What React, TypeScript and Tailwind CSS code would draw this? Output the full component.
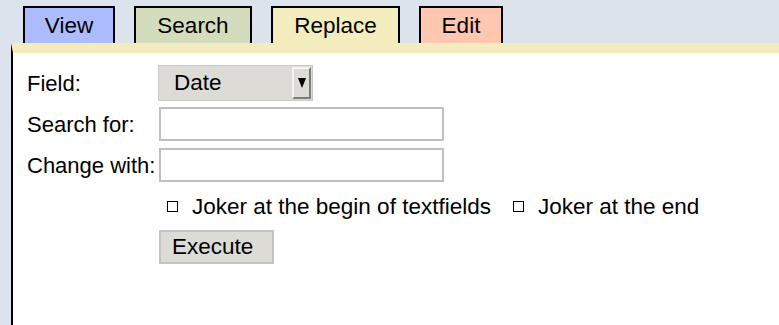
const tabs = [
  { label: "View", width: "w-[92px]", bg: "bg-[#adbcff]" },
  { label: "Search", width: "w-[118px]", bg: "bg-[#d3ddbd]" },
  { label: "Replace", width: "w-[129px]", bg: "bg-[#f3ecbd]" },
  { label: "Edit", width: "w-[84px]", bg: "bg-[#ffc6b0]" },
];

const Check = ({ label }: { label: string }) => (
  <label className="flex items-center">
    <span className="w-[11px] h-[11px] border border-black bg-white mr-[14px] -mt-[2px]" />
    <span>{label}</span>
  </label>
);

export default function App() {
  return (
    <div className="w-[779px] h-[325px] bg-[#dde3ec] font-['Liberation_Sans',Arial,sans-serif] text-[22.5px] text-black overflow-hidden">
      <div className="flex gap-[19px] pl-[23px] pt-[6px]">
        {tabs.map((t) => (
          <div
            key={t.label}
            className={`${t.width} ${t.bg} h-[37px] border-2 border-b-0 border-black flex items-center justify-center leading-none pt-[2px]`}
          >
            {t.label}
          </div>
        ))}
      </div>
      <div className="ml-[11px] h-[282px] bg-white border-l-2 border-black border-t-[10px] border-t-[#f3ecbd] pl-[14px] pt-[12px]">
        <div className="flex items-center h-[36px]">
          <span className="w-[131px] text-[22px]">Field:</span>
          <div className="relative w-[155px] h-[36px] bg-[#dcdbd6] border border-[#c9c9c5] flex items-center pl-[15px]">
            Date
            <span className="absolute right-[1px] top-[1px] w-[19px] h-[32px] bg-[#dcdbd6] border-l-2 border-t-2 border-[#f4f4f2] border-r-2 border-b-2 border-r-[#7c7c7c] border-b-[#7c7c7c] flex justify-center pt-[9px]">
              <svg width="8" height="10" viewBox="0 0 8 10">
                <path d="M0 0h8L4 10z" fill="#000" />
              </svg>
            </span>
          </div>
        </div>
        <div className="flex items-center mt-[6px]">
          <span className="w-[132px] text-[22px]">Search for:</span>
          <input className="w-[285px] h-[34px] border-2 border-[#c0c0c0] bg-white outline-none" />
        </div>
        <div className="flex items-center mt-[7px]">
          <span className="w-[132px] text-[22px]">Change with:</span>
          <input className="w-[285px] h-[34px] border-2 border-[#c0c0c0] bg-white outline-none" />
        </div>
        <div className="flex items-center h-[26px] mt-[12px] pl-[140px] gap-[22px]">
          <Check label="Joker at the begin of textfields" />
          <Check label="Joker at the end" />
        </div>
        <div className="mt-[10px] pl-[132px]">
          <button className="w-[115px] h-[34px] bg-[#dcdbd6] border-2 border-[#c4c4c4] text-left pl-[11px] leading-none">
            Execute
          </button>
        </div>
      </div>
    </div>
  );
}
